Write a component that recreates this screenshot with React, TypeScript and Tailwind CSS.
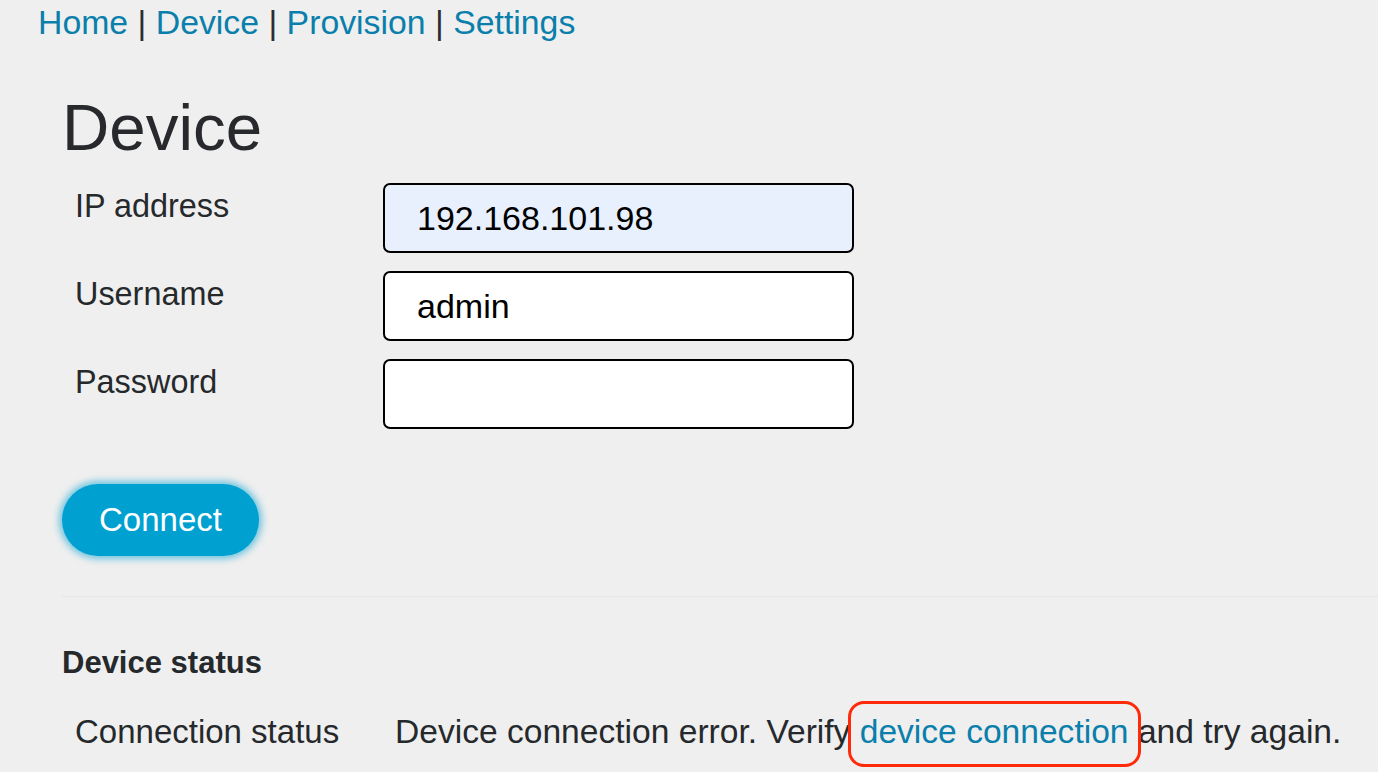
import React from "react";

const font = "font-['Liberation_Sans',Arial,Helvetica,sans-serif]";

function Field({ label, value, autofill }: { label: string; value: string; autofill?: boolean }) {
  return (
    <div className="flex items-start">
      <div className="w-[321px] pl-[13px] pt-[4px] text-[32.4px] leading-[38px] text-[#26292c]">{label}</div>
      <input
        readOnly
        defaultValue={value}
        className={`h-[70px] w-[471px] rounded-[7px] border-2 border-black pl-[32px] text-[34px] text-black outline-none ${font} ${
          autofill ? "bg-[#e8f0fe]" : "bg-white"
        }`}
      />
    </div>
  );
}

export default function App() {
  return (
    <div className={`min-h-screen w-full overflow-hidden bg-[#efefef] ${font} text-[#26292c]`}>
      <nav className="pl-[38px] pt-[2px] text-[33.8px] leading-[40px]">
        <a className="text-[#0a7fab]">Home</a>
        <span className="text-[#2b2d30]"> | </span>
        <a className="text-[#0a7fab]">Device</a>
        <span className="text-[#2b2d30]"> | </span>
        <a className="text-[#0a7fab]">Provision</a>
        <span className="text-[#2b2d30]"> | </span>
        <a className="text-[#0a7fab]">Settings</a>
      </nav>

      <main className="pl-[62px]">
        <h1 className="mt-[47px] text-[65.5px] font-normal leading-[78px] text-[#27292c]">Device</h1>

        <div className="mt-[16px] flex flex-col gap-[18px]">
          <Field label="IP address" value="192.168.101.98" autofill />
          <Field label="Username" value="admin" />
          <Field label="Password" value="" />
        </div>

        <button className="mt-[55px] flex h-[72px] w-[197px] items-center justify-center rounded-full bg-[#00a1d1] text-[33px] text-white shadow-[0_0_7px_3px_rgba(0,160,209,0.55)]">
          Connect
        </button>

        <div className="mt-[40px] h-px w-full bg-[#e6e6e6]" />

        <h2 className="mt-[47px] text-[31px] font-bold leading-[38px] text-[#26292c]">Device status</h2>

        <div className="mt-[31px] flex items-baseline whitespace-nowrap">
          <div className="w-[333px] pl-[13px] text-[33px] leading-[38px]">Connection status</div>
          <div className="text-[33.6px] leading-[38px]">
            Device connection error. Verify{" "}
            <span className="relative">
              <a className="text-[#0a7fab]">device connection</a>
              <span className="absolute -left-[12px] -right-[12px] -top-[12px] -bottom-[17px] rounded-[16px] border-[3px] border-[#ff2a0a]" />
            </span>{" "}
            and try again.
          </div>
        </div>
      </main>
    </div>
  );
}
